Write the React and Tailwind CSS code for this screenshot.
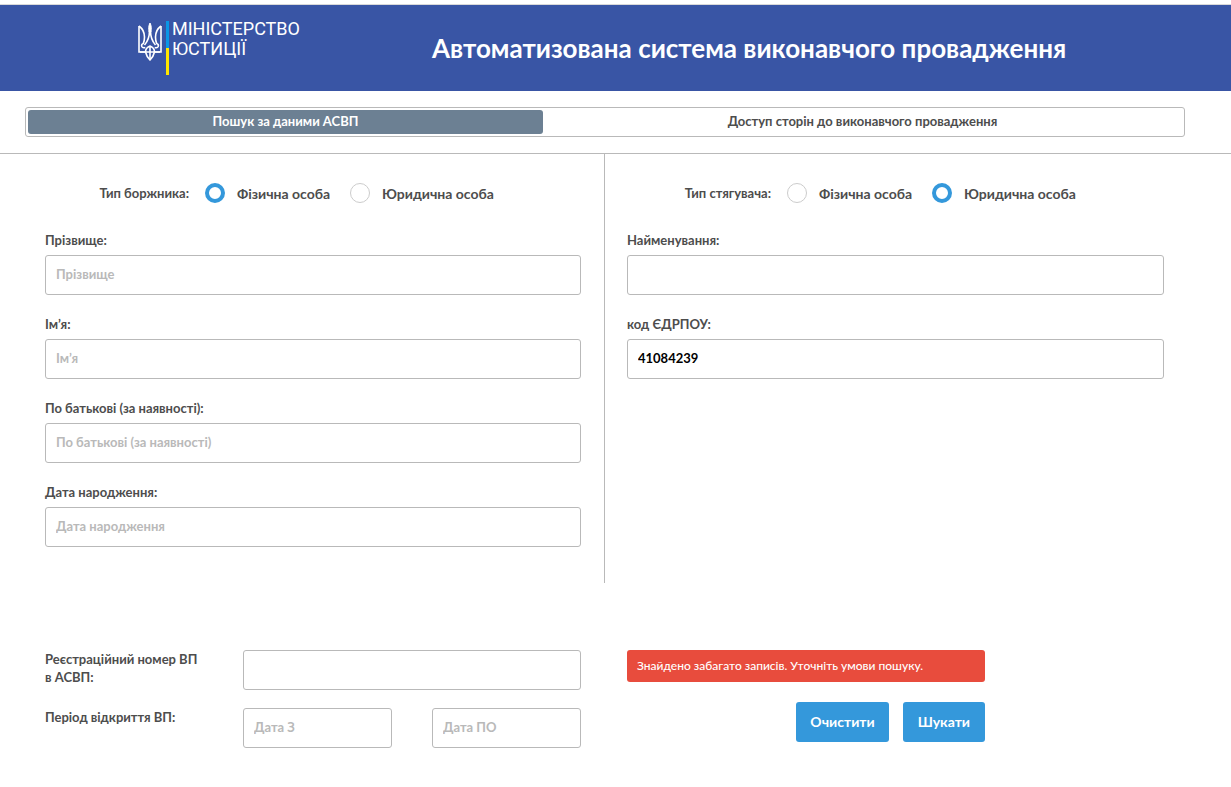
import { useState } from "react";

const PERSON_TYPES = [
  { value: "person", label: "Фізична особа" },
  { value: "company", label: "Юридична особа" },
];

const inputStyle =
  "w-full h-10 px-2.5 pb-0.5 border border-[#b9b9b9] rounded-[3px] bg-white text-[13px] font-bold text-black placeholder:text-[#b9b9b9] outline-none focus:border-[#3498db]";

function Logo() {
  return (
    <a href="#" className="flex items-start text-white">
      <svg
        width="24"
        height="38"
        viewBox="0 0 24 38"
        fill="none"
        stroke="currentColor"
        strokeWidth="1.6"
        className="mt-0.5"
      >
        <path d="M1 3v26h6.500c.8 3.500 2.500 6 4.500 8 2-2 3.700-4.500 4.500-8H23V3" />
        <path d="M1 3c4 3 5.500 7 5.500 11 0 3-.3 4.500-1.200 6.500-1.500.5-2 1.500-1.500 3 .5 1.200 2 1.500 3.500 1" />
        <path d="M23 3c-4 3-5.500 7-5.500 11 0 3 .3 4.500 1.200 6.500 1.500.5 2 1.500 1.500 3-.5 1.200-2 1.500-3.500 1" />
        <path d="M12 0c-1.500 2.500-1.500 6-.9 9h1.800c.6-3 .6-6.500-.9-9z" fill="currentColor" strokeWidth="1" />
        <path d="M11.500 8c0 6-1.500 10-5 14M12.500 8c0 6 1.500 10 5 14" />
        <path d="M12 23v13M2 29h20M7.500 29c0-3 2-5 4.500-6 2.500 1 4.500 3 4.500 6" />
      </svg>
      <span className="flex flex-col w-[3px] h-[54px] ml-1">
        <span className="flex-1 bg-[#0a96e6]" />
        <span className="flex-1 bg-[#ffe600]" />
      </span>
      <span className="flex flex-col ml-[3px] -mt-0.5 font-['Roboto',sans-serif] font-normal text-[18px] leading-5 whitespace-nowrap">
        <span>МІНІСТЕРСТВО</span>
        <span>ЮСТИЦІЇ</span>
      </span>
    </a>
  );
}

function TypePicker({ title, name, value, onChange }) {
  return (
    <div role="radiogroup" aria-labelledby={`${name}-type`} className="flex items-center h-5">
      <span id={`${name}-type`} className="w-36 mr-4 pt-0.5 text-right">
        {title}
      </span>
      {PERSON_TYPES.map((t) => (
        <label key={t.value} className="flex items-center gap-3 w-[145px] text-sm whitespace-nowrap">
          <input
            type="radio"
            name={name}
            checked={value === t.value}
            onChange={() => onChange(t.value)}
            className="shrink-0 appearance-none size-5 rounded-full border border-[#cccccc] bg-white checked:border-4 checked:border-[#3498db]"
          />
          <span className="pt-0.5">{t.label}</span>
        </label>
      ))}
    </div>
  );
}

function Field({ id, label, ...rest }) {
  return (
    <div>
      <label htmlFor={id} className="block mb-1.5 leading-[18px]">
        {label}
      </label>
      <input id={id} type="text" className={inputStyle} {...rest} />
    </div>
  );
}

export default function App() {
  const [tab, setTab] = useState("search");
  const [debtor, setDebtor] = useState("person");
  const [creditor, setCreditor] = useState("company");

  const tabStyle = (active) =>
    `h-6 rounded-[3px] font-bold ${active ? "bg-[#6c8093] text-white" : "text-[#4d4d4d]"}`;

  return (
    <div className="bg-white font-['Lato',sans-serif] text-[13px] font-bold text-[#4d4d4d]">

      {/* HEADER */}
      <header className="flex items-center mt-1 h-[87px] border-t border-[#d9d9d9] bg-[#3955a5]">
        <div className="w-[432px] shrink-0 pl-[138px]">
          <Logo />
        </div>
        <h1 className="text-[26px] leading-8 text-white">
          Автоматизована система виконавчого провадження
        </h1>
      </header>

      {/* TABS */}
      <nav className="py-4 pl-[25px] pr-[46px] border-b border-[#b9b9b9]">
        <div className="flex p-0.5 border border-[#b9b9b9] rounded-[3px]">
          <button
            type="button"
            onClick={() => setTab("search")}
            className={`w-[515px] ${tabStyle(tab === "search")}`}
          >
            Пошук за даними АСВП
          </button>
          <button
            type="button"
            onClick={() => setTab("access")}
            className={`flex-1 ${tabStyle(tab === "access")}`}
          >
            Доступ сторін до виконавчого провадження
          </button>
        </div>
      </nav>

      <form onSubmit={(e) => e.preventDefault()} className="pl-[45px] pr-[66px]">

        {/* DEBTOR / CREDITOR */}
        <div className="grid grid-cols-2">
          <section className="flex flex-col gap-5 pt-[29px] pb-9 pr-[23px] border-r border-[#b9b9b9]">
            <div className="pb-2">
              <TypePicker title="Тип боржника:" name="debtor" value={debtor} onChange={setDebtor} />
            </div>
            <Field id="surname" label="Прізвище:" placeholder="Прізвище" />
            <Field id="firstname" label="Ім’я:" placeholder="Ім’я" />
            <Field
              id="patronymic"
              label="По батькові (за наявності):"
              placeholder="По батькові (за наявності)"
            />
            <Field id="birthdate" label="Дата народження:" placeholder="Дата народження" />
          </section>

          <section className="flex flex-col gap-5 pt-[29px] pl-[22px] pr-px">
            <div className="pb-2">
              <TypePicker title="Тип стягувача:" name="creditor" value={creditor} onChange={setCreditor} />
            </div>
            <Field id="company" label="Найменування:" />
            <Field id="edrpou" label="код ЄДРПОУ:" defaultValue="41084239" />
          </section>
        </div>

        {/* PROCEEDING NUMBER, PERIOD, ACTIONS */}
        <div className="grid grid-cols-2 pt-[67px] pb-10">
          <div className="flex flex-col gap-[18px] pr-6">
            <div className="flex">
              <label htmlFor="number" className="w-[198px] shrink-0 leading-[18px]">
                Реєстраційний номер ВП
                <br />
                в АСВП:
              </label>
              <input id="number" type="text" className={inputStyle} />
            </div>
            <div className="flex">
              <label htmlFor="from" className="w-[198px] shrink-0 leading-[18px]">
                Період відкриття ВП:
              </label>
              <div className="flex flex-1 gap-10">
                <input id="from" type="text" placeholder="Дата З" className={inputStyle} />
                <input type="text" aria-label="Дата ПО" placeholder="Дата ПО" className={inputStyle} />
              </div>
            </div>
          </div>

          <div className="pl-[22px] pr-px">
            <div className="flex flex-col gap-5 w-2/3">
              <p
                role="alert"
                className="h-8 px-2.5 rounded-[3px] bg-[#e84c3d] text-xs leading-8 font-medium text-white whitespace-nowrap"
              >
                Знайдено забагато записів. Уточніть умови пошуку.
              </p>
              <div className="flex justify-end gap-3.5 text-sm">
                <button type="reset" className="h-10 px-3.5 rounded-[3px] bg-[#3498db] font-bold text-white">
                  Очистити
                </button>
                <button type="submit" className="h-10 px-[15px] rounded-[3px] bg-[#3498db] font-bold text-white">
                  Шукати
                </button>
              </div>
            </div>
          </div>
        </div>
      </form>
    </div>
  );
}
